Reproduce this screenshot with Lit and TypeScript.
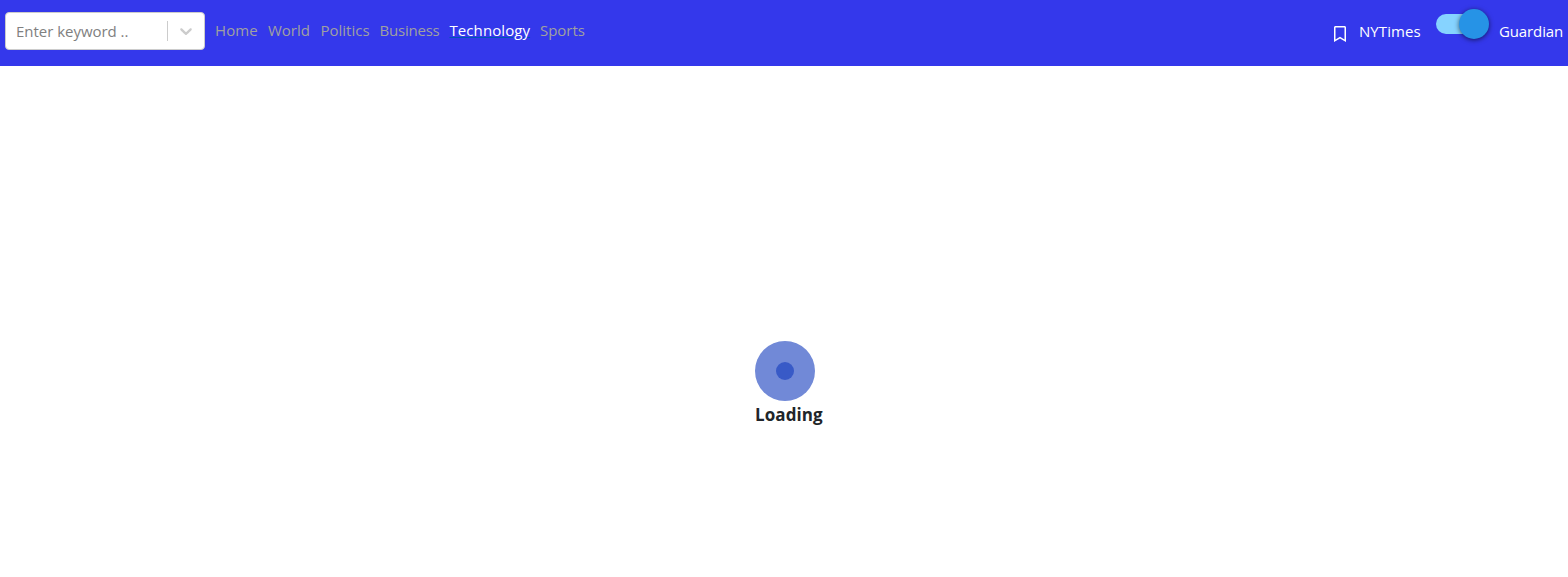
import { LitElement, html, css } from "lit";
import { customElement, state } from "lit/decorators.js";

const LINKS = ["Home", "World", "Politics", "Business", "Technology", "Sports"];

@customElement("app-root")
export class AppRoot extends LitElement {
  static styles = css`
    :host {
      display: flex;
      flex-direction: column;
      height: 577px;
      overflow: hidden;
      background: #fff;
      color: #212529;
      font: 15px/24px "Open Sans", "Noto Sans", sans-serif;
    }
    * { box-sizing: border-box; }
    nav {
      display: flex;
      align-items: flex-start;
      height: 66px;
      padding: 0 5px;
      background: #3438eb;
      flex: none;
    }
    .select {
      display: flex;
      align-items: center;
      width: 200px;
      height: 38px;
      margin-top: 12px;
      border: 1px solid #ccc;
      border-radius: 4px;
      background: #fff;
      color: gray;
    }
    .placeholder { flex: 1; padding-left: 10px; white-space: nowrap; letter-spacing: -0.03px; }
    .separator { width: 1px; height: 20px; background: #ccc; }
    .arrow { display: block; width: 20px; height: 20px; margin: 0 8px; fill: #ccc; }
    .links { display: flex; gap: 10px; margin: 18px 0 0 10px; color: #a0a0a0; }
    .link { white-space: nowrap; cursor: pointer; }
    .home { width: 43px; letter-spacing: 0.1px; }
    .world { width: 42.5px; letter-spacing: 0; }
    .politics { width: 49px; letter-spacing: 0; }
    .business { width: 60px; letter-spacing: -0.22px; }
    .technology { width: 80.5px; letter-spacing: 0.08px; }
    .sports { width: 45px; letter-spacing: -0.03px; }
    .active { color: #fff; text-decoration: underline #0056b3 1px; text-underline-offset: 1px; }
    .tools { display: flex; margin-left: auto; color: #fff; }
    .bookmark { display: block; width: 12px; height: 16px; margin: 26px 13px 0 0; fill: #fff; }
    .source { margin-top: 19px; white-space: nowrap; }
    .nyt { width: 62px; letter-spacing: 0.08px; }
    .guardian { width: 64px; letter-spacing: -0.12px; }
    .switch {
      width: 48px;
      height: 20px;
      margin: 14px 15px 0;
      border-radius: 10px;
      background: #86d3ff;
      display: flex;
      align-items: center;
    }
    .handle {
      flex: none;
      width: 30px;
      height: 30px;
      margin-left: 23px;
      border-radius: 50%;
      background: #2693e6;
      box-shadow: 0 1px 5px rgba(0, 0, 0, 0.6);
    }
    main { flex: 1; padding: 275px 0 0 755px; }
    .bounce {
      display: grid;
      place-items: center;
      width: 60px;
      height: 60px;
      border-radius: 50%;
      background: #7189d7;
    }
    .core { width: 18px; height: 18px; border-radius: 50%; background: #385ac7; }
    .loading { margin-top: 2px; font-size: 17px; font-weight: 700; letter-spacing: 0.08px; color: #212529; }
  `;

  @state() private active = "Technology";

  render() {
    return html`
      <nav>
        <div class="select">
          <span class="placeholder">Enter keyword ..</span>
          <span class="separator"></span>
          <svg class="arrow" viewBox="0 0 20 20"><path d="M4.516 7.548c0.436-0.446 1.043-0.481 1.576 0l3.908 3.747 3.908-3.747c0.533-0.481 1.141-0.446 1.574 0 0.436 0.445 0.408 1.197 0 1.615-0.406 0.418-4.695 4.502-4.695 4.502-0.217 0.223-0.502 0.335-0.787 0.335s-0.57-0.112-0.789-0.335c0 0-4.287-4.084-4.695-4.502s-0.436-1.17 0-1.615z"/></svg>
        </div>
        <div class="links">
          ${LINKS.map(
            (name) => html`<span
              class="link ${name.toLowerCase()} ${name === this.active ? "active" : ""}"
              @click=${() => (this.active = name)}
            >${name}</span>`
          )}
        </div>
        <div class="tools">
          <svg class="bookmark" viewBox="0 0 384 512"><path d="M336 0H48C21.49 0 0 21.49 0 48v464l192-112 192 112V48c0-26.51-21.49-48-48-48zm0 428.43l-144-84-144 84V54a6 6 0 0 1 6-6h276c3.314 0 6 2.683 6 5.996V428.43z"/></svg>
          <span class="source nyt">NYTimes</span>
          <div class="switch"><div class="handle"></div></div>
          <span class="source guardian">Guardian</span>
        </div>
      </nav>
      <main>
        <div class="bounce"><div class="core"></div></div>
        <div class="loading">Loading</div>
      </main>
    `;
  }
}
